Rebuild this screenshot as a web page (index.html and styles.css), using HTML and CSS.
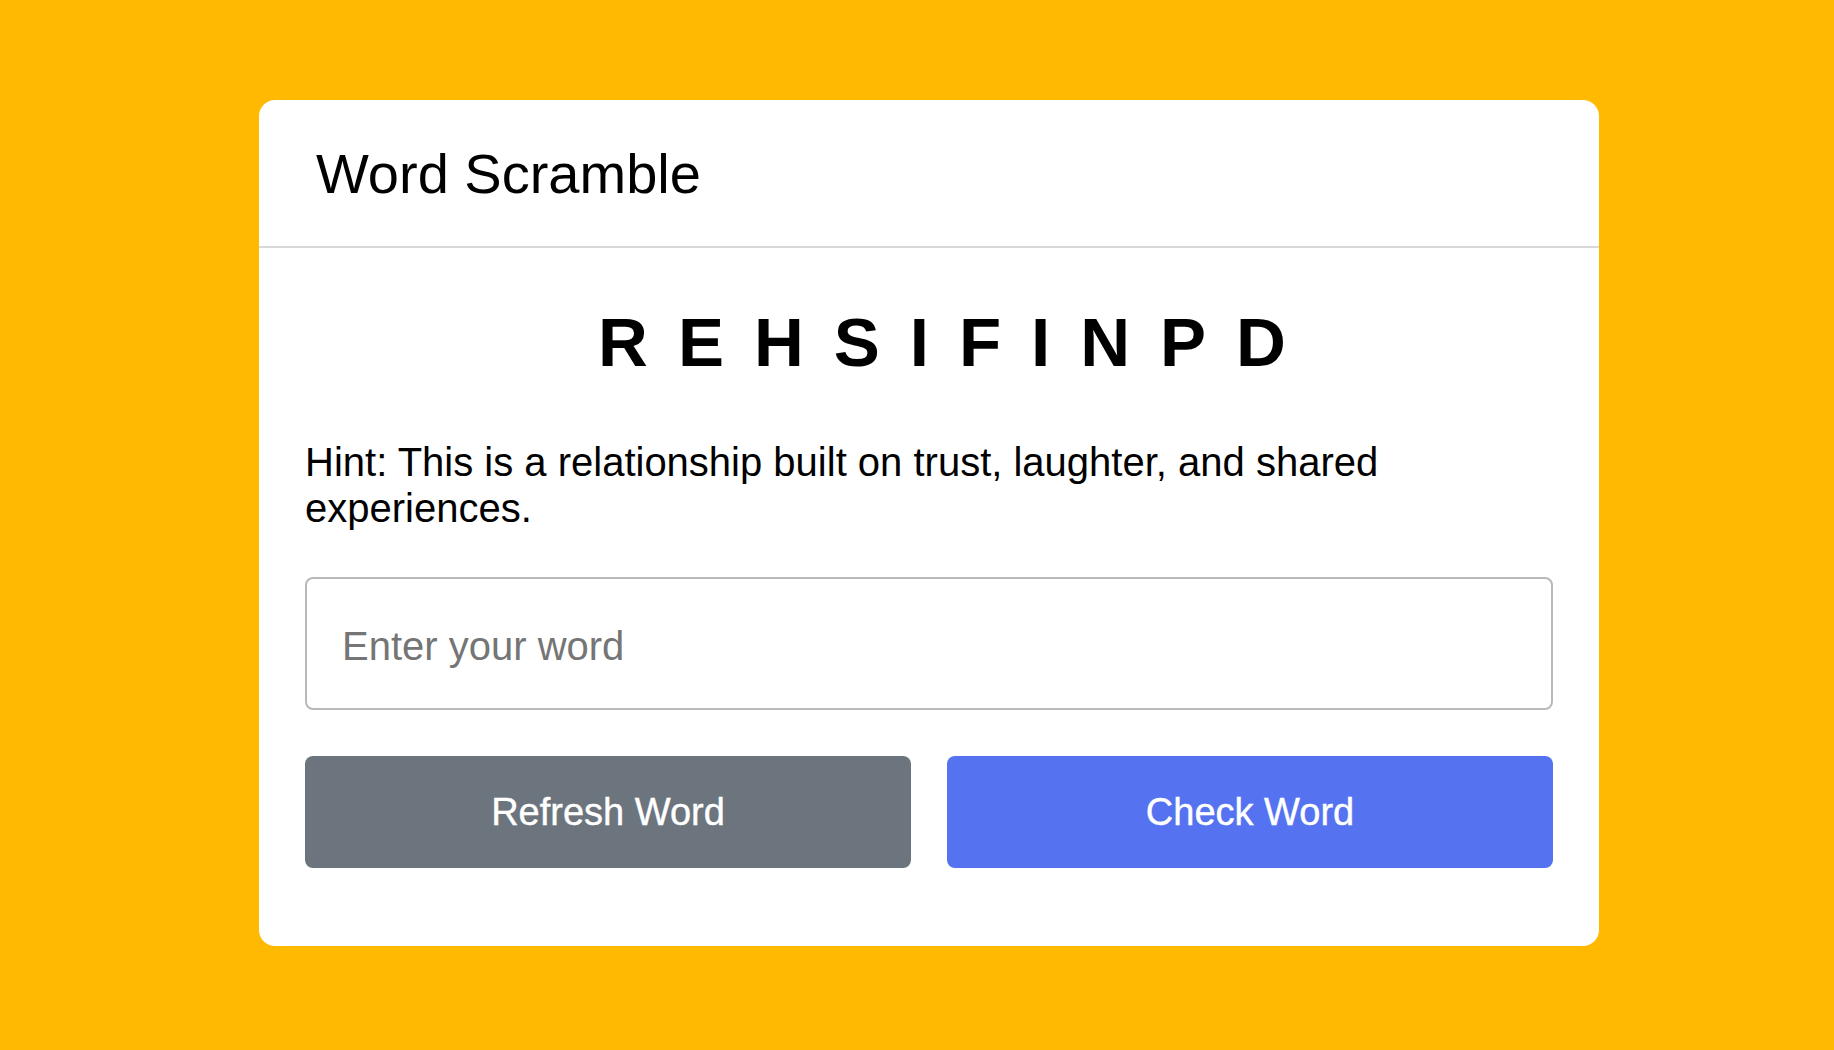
FILE: index.html
```html
<!DOCTYPE html>
<html lang="en">
<head>
<meta charset="utf-8">
<title>Word Scramble</title>
<link rel="stylesheet" href="styles.css">
</head>
<body>
<div class="page">
  <div class="card">
    <div class="card-header">
      <h1 class="title">Word Scramble</h1>
    </div>
    <div class="card-body">
      <div class="scrambled">REHSIFINPD</div>
      <p class="hint">Hint: This is a relationship built on trust, laughter, and shared experiences.</p>
      <input class="word-input" type="text" placeholder="Enter your word">
      <div class="actions">
        <button class="btn btn-refresh" type="button">Refresh Word</button>
        <button class="btn btn-check" type="button">Check Word</button>
      </div>
    </div>
  </div>
</div>
</body>
</html>
```
FILE: styles.css
```css
* {
  box-sizing: border-box;
}

html, body {
  margin: 0;
  padding: 0;
}

body {
  background: #ffb900;
  font-family: "Liberation Sans", Arial, Helvetica, sans-serif;
  color: #000;
  height: 1050px;
  overflow: hidden;
}

.page {
  padding: 100px 235px 0 259px;
}

.card {
  background: #fff;
  border-radius: 16px;
  width: 1340px;
}

.card-header {
  padding: 41px 57px 40px;
  border-bottom: 2px solid #d8d8d8;
}

.title {
  margin: 0;
  font-size: 56px;
  font-weight: 400;
  line-height: normal;
}

.card-body {
  padding: 55px 46px 78px;
}

.scrambled {
  font-size: 69px;
  font-weight: 700;
  letter-spacing: 30px;
  text-align: center;
  padding-left: 56px;
  line-height: normal;
}

.hint {
  margin: 57px 0 0;
  font-size: 40px;
  line-height: 46px;
}

.word-input {
  display: block;
  width: 100%;
  height: 133px;
  margin-top: 46px;
  padding: 5px 30px 0 35px;
  border: 2px solid #b9b9b9;
  border-radius: 8px;
  font-family: "Liberation Sans", Arial, Helvetica, sans-serif;
  font-size: 40px;
  color: #000;
  background: #fff;
  outline: none;
}

.word-input::placeholder {
  color: #757575;
}

.actions {
  display: grid;
  grid-template-columns: 1fr 1fr;
  gap: 36px;
  margin-top: 46px;
}

.btn {
  height: 112px;
  border: none;
  border-radius: 8px;
  color: #fff;
  font-family: "Liberation Sans", Arial, Helvetica, sans-serif;
  font-size: 38px;
  -webkit-text-stroke: 0.4px #fff;
  cursor: pointer;
}

.btn-refresh {
  background: #6c757d;
}

.btn-check {
  background: #5573f0;
}
```
